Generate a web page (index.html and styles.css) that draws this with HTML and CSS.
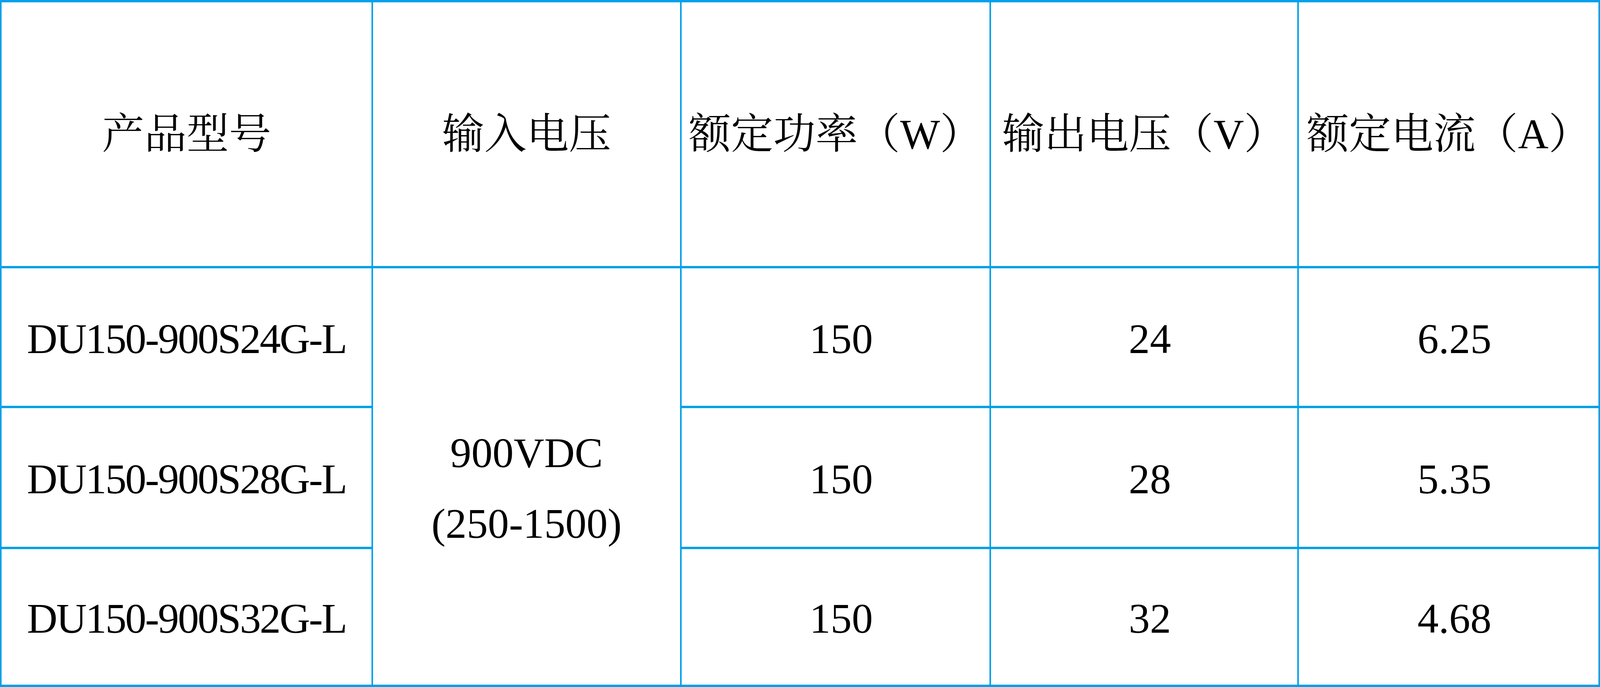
FILE: index.html
```html
<!DOCTYPE html>
<html lang="zh-CN">
<head>
<meta charset="utf-8">
<title>DU150-900 产品参数</title>
<link rel="stylesheet" href="styles.css">
</head>
<body>
<div class="spec">
  <div class="cell head">产品型号</div>
  <div class="cell head">输入电压</div>
  <div class="cell head">额定功率（W）</div>
  <div class="cell head">输出电压（V）</div>
  <div class="cell head">额定电流（A）</div>

  <div class="cell model">DU150-900S24G-L</div>
  <div class="cell merged"><span>900VDC<br>(250-1500)</span></div>
  <div class="cell num">150</div>
  <div class="cell num">24</div>
  <div class="cell num">6.25</div>

  <div class="cell model">DU150-900S28G-L</div>
  <div class="cell num">150</div>
  <div class="cell num">28</div>
  <div class="cell num">5.35</div>

  <div class="cell model">DU150-900S32G-L</div>
  <div class="cell num">150</div>
  <div class="cell num">32</div>
  <div class="cell num">4.68</div>
</div>
</body>
</html>
```

FILE: styles.css
```css
html, body {
  margin: 0;
  padding: 0;
  background: #ffffff;
}

.spec {
  box-sizing: border-box;
  display: grid;
  grid-template-columns: 1300fr 1079fr 1082fr 1078fr 1053fr;
  grid-template-rows: 681fr 357fr 361fr 353fr;
  width: 100vw;
  height: 100vh;
  border-top: 6px solid #00a0e9;
  border-left: 0.107vw solid #00a0e9;
  font-family: "Liberation Serif", "Noto Serif CJK SC", "Noto Sans CJK SC", serif;
  font-size: 2.643vw;
  color: #000000;
}

.cell {
  box-sizing: border-box;
  min-width: 0;
  border-right: 0.107vw solid #00a0e9;
  border-bottom: 6px solid #00a0e9;
  display: flex;
  align-items: center;
  justify-content: center;
  text-align: center;
  white-space: nowrap;
  padding-top: 10px;
}

.head {
  padding-top: 0;
  padding-bottom: 22px;
}

.model {
  letter-spacing: -0.03em;
}

.num {
  padding-left: 0.714vw;
}

.merged {
  grid-column: 2;
  grid-row: 2 / span 3;
  line-height: 181px;
  padding-top: 60px;
}
```
